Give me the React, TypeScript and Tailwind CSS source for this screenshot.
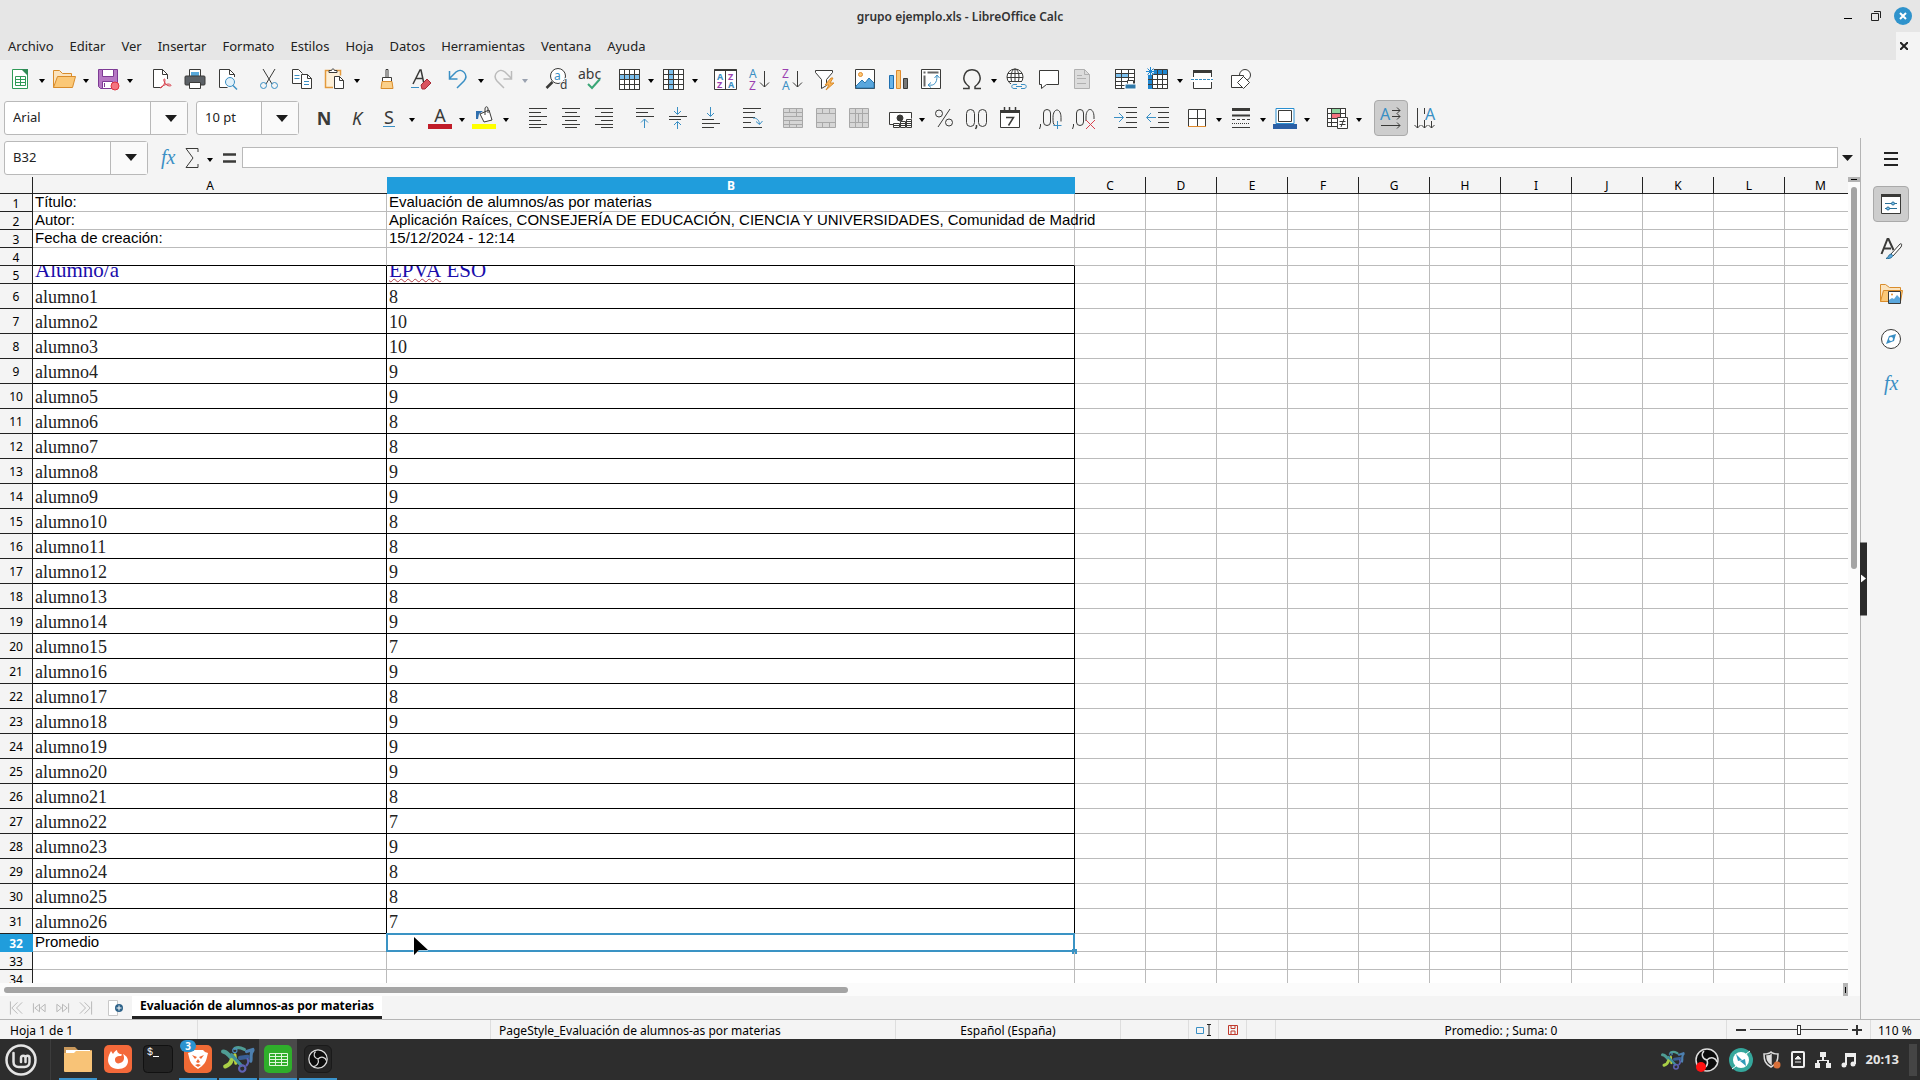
import type { ReactNode } from "react";

const INK = "#3a3a38";
const BLUE = "#3a8fc4";

// toolbar artwork, drawn on a 24px canvas
const icons: Record<string, ReactNode> = {
  newSheet: (
    <>
      <path d="M4.5 2.5h10l5 5v14h-15z" fill="#fff" stroke="#2f9a57" />
      <path d="M13 2h7v7z" fill="#2f8a55" stroke="none" />
      <path d="M7.5 9.5h10v9h-10zM7.5 12.5h10M7.5 15.5h10M12.5 9.5v9" stroke="#2f9a57" />
    </>
  ),
  open: (
    <>
      <path d="M1.5 20.5v-17h6l3 3h9v3" fill="#fbe3bd" stroke="#d98c2b" />
      <path d="M1.5 20.5l4-11h18l-3 11z" fill="#fbc877" stroke="#d98c2b" />
    </>
  ),
  save: (
    <>
      <path d="M2.5 2.5h19v19h-17l-2-2z" fill="#b678c4" stroke="#7d3a94" />
      <path d="M6.5 2.5h11v7h-11zM6.5 14.5h10v7h-10z" fill="#fff" stroke="#7d3a94" />
      <path d="M8.5 16v4" stroke="#7d3a94" />
      <circle cx="19" cy="19" r="4" fill="#f37480" stroke="#e0323f" />
    </>
  ),
  pdf: (
    <>
      <path d="M17.5 12v-4.500l-5-5h-9v18h8" fill="#fff" />
      <path d="M12.500 2.500v5h5" />
      <path d="M10 21c3-1 5-4 5-8 0-2-2-1-1 1 1 3 3 5 6 5 2 0 1-2-2-2-3 .5-6 2-8 4z" stroke="#d8414d" />
    </>
  ),
  print: (
    <>
      <path d="M6.500 9v-6.500h11v6.500" fill="#fff" />
      <path d="M8 5h8v4h-8z" fill="#58a9dc" stroke="none" />
      <rect x="2" y="9" width="20" height="9" rx="1" fill="#5c6166" stroke="#3a3a38" />
      <path d="M6.500 15.500h11v6h-11z" fill="#fff" />
    </>
  ),
  preview: (
    <>
      <path d="M18.500 10v-2.500l-5-5h-10v18h8" fill="#fff" />
      <path d="M13.500 2.500v5h5" />
      <circle cx="14" cy="15" r="4.500" fill="#e2f1fa" stroke={BLUE} />
      <path d="M17 18.500l4 4" stroke={BLUE} strokeWidth="1.500" />
    </>
  ),
  cut: (
    <>
      <path d="M6 2l9 15M18 2l-9 15" />
      <circle cx="6.500" cy="18.500" r="3" stroke={BLUE} />
      <circle cx="17.500" cy="18.500" r="3" stroke={BLUE} />
    </>
  ),
  copy: (
    <>
      <path d="M11.500 16.500h-9v-14h6l4 4" fill="#fff" />
      <path d="M11.500 7.500h6l4 4v10h-10z" fill="#fff" />
      <path d="M17.500 7.500v4h4" />
      <path d="M4.500 8.500h5M4.500 11.500h5M14 14.500h5M14 17.500h5" stroke={BLUE} />
    </>
  ),
  paste: (
    <>
      <path d="M10 20.500h-7.500v-17h15v5" fill="#fdf0d9" stroke="#e49a3c" strokeWidth="1.500" />
      <path d="M6 5.500v-2h2.500c0-2 3-2 3 0h2.500v2z" fill="#fff" />
      <path d="M11.500 9.500h5l4 4v8h-9z" fill="#fff" />
      <path d="M16.500 9.500v4h4" />
    </>
  ),
  brush: (
    <>
      <path d="M11 2.500h2v8h-2zM7.500 10.500h9v4h-9z" fill="#fff" />
      <path d="M7 14.500h10l1 7h-12z" fill="#fbd08a" stroke="#d98c2b" />
    </>
  ),
  clear: (
    <>
      <path d="M5 17l7-14h1l3 14M8 11.500h7" strokeWidth="1.500" />
      <path d="M3 20.500h8" stroke={BLUE} />
      <path d="M13 18l6-6 4 4-6 6h-3z" fill="#d9545f" stroke="#a82a35" />
    </>
  ),
  undo: <path d="M2.500 4v8h8M3 11l6-6c6-5 13 3 8 9l-7 7" stroke={BLUE} strokeWidth="1.500" />,
  redo: <path d="M20.500 4v8h-8M20 11l-6-6c-6-5-13 3-8 9l7 7" stroke="#bbb" strokeWidth="1.500" />,
  find: (
    <>
      <circle cx="13" cy="9" r="7.500" fill="#fff" />
      <path d="M7.500 15l-6 6" strokeWidth="2.500" />
      <text x="9" y="13" fontSize="12" fill={BLUE} stroke="none">a</text>
      <text x="15" y="22" fontSize="12" fill={INK} stroke="#f4f4f4" strokeWidth="2" paintOrder="stroke">d</text>
    </>
  ),
  spell: (
    <>
      <text x="0" y="12" fontSize="14" fill={INK} stroke="none">abc</text>
      <path d="M10 17l4 4 8-9" stroke="#3aa676" strokeWidth="2" />
    </>
  ),
  row: (
    <>
      <path d="M2.500 2.500h20v20h-20z" fill="#fff" />
      <path d="M2 7h21v6h-21z" fill="#7cc0ee" stroke="none" />
      <path d="M2.500 2.500h20v20h-20zM2.500 7.500h20M2.500 12.500h20M2.500 17.500h20M7.500 2.500v20M12.500 2.500v20M17.500 2.500v20" />
    </>
  ),
  column: (
    <>
      <path d="M2.500 2.500h20v20h-20z" fill="#fff" />
      <path d="M7 2h6v21h-6z" fill="#7cc0ee" stroke="none" />
      <path d="M2.500 2.500h20v20h-20zM2.500 7.500h20M2.500 12.500h20M2.500 17.500h20M7.500 2.500v20M12.500 2.500v20M17.500 2.500v20" />
    </>
  ),
  sort: (
    <>
      <path d="M1.500 2.500h22v20h-22zM12.500 2.500v20" fill="#fff" />
      <path d="M1.500 3h22" strokeWidth="2" />
      <g stroke="none" fontSize="9" fontWeight="bold">
        <text x="4" y="13" fill={BLUE}>A</text>
        <text x="4" y="21" fill="#9a3fb0">Z</text>
        <text x="15" y="13" fill="#9a3fb0">Z</text>
        <text x="15" y="21" fill={BLUE}>A</text>
      </g>
    </>
  ),
  sortAsc: (
    <>
      <text x="3" y="11" fontSize="12" fill={BLUE} stroke="none">A</text>
      <text x="3" y="23" fontSize="12" fill="#9a3fb0" stroke="none">Z</text>
      <path d="M18.500 4v16M14 15.500l4.500 4.500 4.500-4.500" />
    </>
  ),
  sortDesc: (
    <>
      <text x="3" y="11" fontSize="12" fill="#9a3fb0" stroke="none">Z</text>
      <text x="3" y="23" fontSize="12" fill={BLUE} stroke="none">A</text>
      <path d="M18.500 4v16M14 15.500l4.500 4.500 4.500-4.500" />
    </>
  ),
  filter: (
    <>
      <path d="M3.500 3.500h17v2l-6 7v6l-5 3v-9l-6-7z" fill="#fff" />
      <path d="M19 11l-6 7h4l-3 5 8-7h-4l3-5z" fill="#fbb457" stroke="#d98c2b" />
    </>
  ),
  image: (
    <>
      <path d="M2.500 2.500h19v19h-19z" fill="#fff" />
      <path d="M3 19l6-6 3 3 4-5 5 5v5h-18z" fill="#5aa7dd" stroke="#2a78b0" />
      <circle cx="7.500" cy="7.500" r="2" fill="#fbc877" stroke="#e08a2c" />
    </>
  ),
  chart: (
    <>
      <path d="M3.500 8.500h4v13h-4z" fill="#68b3e8" stroke="#1f6fb0" />
      <path d="M10.500 3.500h4v18h-4z" fill="#fbc877" stroke="#e08a2c" />
      <path d="M17.500 11.500h4v10h-4z" fill="#777" />
    </>
  ),
  pivot: (
    <>
      <path d="M2.500 2.500h19v19h-19z" fill="#fff" />
      <path d="M4.500 5.500h2M8.500 5.500h11M5.500 8.500v11" stroke="#666" strokeWidth="2" />
      <path d="M10 18c5 1 8-2 8-9M15.500 11l2.500-3 2.500 3M12 15.500l-3 2.500 3 2.500" stroke={BLUE} />
    </>
  ),
  omega: <path d="M3 21.500h6v-2c-4-3-6-6-5-10 2-9 14-9 16 0 1 4-1 7-5 10v2h6" strokeWidth="1.500" />,
  link: (
    <>
      <circle cx="11" cy="10" r="8" fill="#fff" />
      <ellipse cx="11" cy="10" rx="4" ry="8" />
      <path d="M3 10.500h16M4 6.500h14M4 14.500h14M11 2v16" />
      <rect x="7" y="15" width="16" height="8" fill="#f4f4f4" stroke="none" />
      <path d="M13 17.500h-3c-3 0-3 4 0 4h3M17 17.500h3c3 0 3 4 0 4h-3M12 19.500h6" stroke={BLUE} />
    </>
  ),
  comment: <path d="M2.500 3.500h19v14h-12l-5 4v-4h-2z" fill="#fff" />,
  headerFooter: (
    <>
      <path d="M4.500 2.500h10l5 5v14h-15z" fill="#dcdcdc" stroke="#b0b0b0" />
      <path d="M14.500 2.500v5h5M7 8.500h5M7 11.500h9M7 16.500h9" stroke="#b0b0b0" />
    </>
  ),
  printArea: (
    <>
      <path d="M2.500 2.500h19v19h-19z" fill="#fff" />
      <path d="M2 6h13v5h-13z" fill="#7cc0ee" stroke="none" />
      <path d="M2.500 2.500h19v19h-19zM2.500 6.500h19M2.500 10.500h19M2.500 14.500h19M2.500 18.500h19M8.500 2.500v19M15.500 2.500v19" />
      <path d="M14.500 18v-4.500h6v4.500" fill="#fff" />
      <path d="M12 17h11v5h-11z" fill="#2f78a8" stroke="#fff" />
    </>
  ),
  freeze: (
    <>
      <path d="M2.500 2.500h19v19h-19z" fill="#fff" />
      <path d="M2 3h19v4h-19zM2 3h5v19h-5z" fill="#1f86cf" stroke="none" />
      <path d="M6.500 7.500h15v14h-15zM6.500 12.500h15M6.500 17.500h15M11.500 7.500v14M16.500 7.500v14M11.500 3v4M16.500 3v4M2 12.500h4M2 17.500h4" />
      <circle cx="4" cy="4" r="4" fill="#f4f4f4" stroke="none" />
      <path d="M4.500 0v9M0 4.500h9M1.500 1.500l6 6M7.500 1.500l-6 6" stroke="#1f86cf" />
    </>
  ),
  split: (
    <>
      <path d="M3.500 3.500h18v18h-18z" fill="#fff" />
      <path d="M3 4.500h19" strokeWidth="3" />
      <path d="M1 12.500h22" stroke="#fff" strokeWidth="5" />
      <path d="M1 12.500h22" stroke={BLUE} strokeDasharray="3 1" />
    </>
  ),
  draw: (
    <>
      <circle cx="16" cy="8" r="5.500" fill="#fff" />
      <path d="M2.500 8.500h12v12h-12z" fill="#fff" />
      <path d="M14.500 9.500l6 6-6 6-6-6z" fill="#fff" />
    </>
  ),
  bold: <text x="12" y="19" fontSize="18" fontWeight="bold" textAnchor="middle" fill={INK} stroke="none">N</text>,
  italic: <text x="12" y="19" fontSize="18" fontStyle="italic" textAnchor="middle" fill={INK} stroke="none">K</text>,
  underline: (
    <>
      <text x="11" y="18" fontSize="18" textAnchor="middle" fill={INK} stroke="none">S</text>
      <path d="M5 20.500h12" stroke={BLUE} />
    </>
  ),
  fontColor: (
    <>
      <text x="12" y="16" fontSize="18" textAnchor="middle" fill={INK} stroke="none">A</text>
      <path d="M0 18h24v5h-24z" fill="#c01c28" stroke="none" />
    </>
  ),
  highlight: (
    <>
      <path d="M8 8l9-4 3 10-8 2z" fill="#fff" />
      <path d="M13 9v-6c0-3 3-3 3 0v4" />
      <path d="M4 13V5h7l-4 3-1 5z" fill="#2f6fae" stroke="none" />
      <path d="M0 18h24v5h-24z" fill="#ffff00" stroke="none" />
    </>
  ),
  alignLeft: <path d="M3 2.500h18M3 6.500h12M3 10.500h18M3 14.500h12M3 18.500h18M3 21.500h12" />,
  alignCenter: <path d="M3 2.500h18M6 6.500h12M3 10.500h18M6 14.500h12M3 18.500h18M6 21.500h12" />,
  alignRight: <path d="M3 2.500h18M9 6.500h12M3 10.500h18M9 14.500h12M3 18.500h18M9 21.500h12" />,
  top: (
    <>
      <path d="M3 2.500h18M3 6.500h12M3 10.500h18" />
      <path d="M11.500 22v-9M8 16.500l3.500-3.500 3.500 3.500" stroke={BLUE} />
    </>
  ),
  middle: (
    <>
      <path d="M3 10.500h18M3 13.500h12" />
      <path d="M11.500 1v7M8 5l3.500 3.500 3.500-3.500M11.500 23v-7M8 19l3.500-3.500 3.500 3.500" stroke={BLUE} />
    </>
  ),
  bottom: (
    <>
      <path d="M3 13.500h12M3 17.500h18M3 21.500h12" />
      <path d="M11.500 1v9M8 7l3.500 3.500 3.500-3.500" stroke={BLUE} />
    </>
  ),
  wrap: (
    <>
      <path d="M3 2.500h18M3 6.500h12M3 11.500h12M3 16.500h8M3 21.500h19" />
      <path d="M13 12c4 0 6 2 6.500 6M16 15.500l3.500 3 3-3.500" stroke={BLUE} />
    </>
  ),
  merge: (
    <>
      <path d="M2.500 2.500h19v19h-19z" fill="#d6d6d6" stroke="#a8a8a8" />
      <path d="M2.500 6.500h19M2.500 10.500h19M2.500 14.500h19M2.500 18.500h19M8.500 2.500v4M15.500 2.500v8M8.500 14.500v7M15.500 18.500v3" stroke="#a8a8a8" />
    </>
  ),
  mergeCenter: (
    <>
      <path d="M2.500 2.500h19v19h-19z" fill="#d6d6d6" stroke="#a8a8a8" />
      <path d="M2.500 7.500h19M2.500 16.500h19M8.500 2.500v5M15.500 2.500v5M8.500 16.500v5M15.500 16.500v5" stroke="#a8a8a8" />
    </>
  ),
  unmerge: (
    <>
      <path d="M2.500 2.500h19v19h-19z" fill="#d6d6d6" stroke="#a8a8a8" />
      <path d="M2.500 7.500h19M2.500 16.500h19M8.500 2.500v5M15.500 2.500v19M8.500 7.500v14M11.500 7.500v9" stroke="#a8a8a8" />
    </>
  ),
  currency: (
    <>
      <path d="M12 18.500h-10.500v-12h22v6" fill="#fff" />
      <circle cx="12" cy="12" r="3" fill={INK} />
      <path d="M5.500 17.500h6v4h-6zM5.500 19.500h6M12.500 15.500h5v6h-5zM12.500 17.500h5M12.500 19.500h5M18.500 13.500h5v8h-5zM18.500 15.500h5M18.500 17.500h5M18.500 19.500h5" fill="#fff" />
    </>
  ),
  percent: (
    <>
      <circle cx="7" cy="7.500" r="3.500" />
      <circle cx="17" cy="16.500" r="3.500" />
      <path d="M18 3l-12 18" />
    </>
  ),
  number: (
    <>
      <rect x="1.500" y="3.500" width="8" height="17" rx="4" />
      <rect x="13.500" y="3.500" width="8" height="17" rx="4" />
      <path d="M11.500 19v2l-1 2" strokeWidth="1.500" />
    </>
  ),
  date: (
    <>
      <path d="M2.500 4.500h19v17h-19z" fill="#fff" />
      <path d="M2 5.500h20" strokeWidth="3" />
      <path d="M6.500 1v4M11.500 1v4M17.500 1v4M8 11.500h7.500l-5 8" strokeWidth="1.500" />
    </>
  ),
  addDecimal: (
    <>
      <path d="M1.500 18v2l-1 3" />
      <rect x="4.500" y="3.500" width="7" height="16" rx="3.500" />
      <path d="M16 19.500c-2-1-2-4-2-8 0-10 8-10 8 0v4" />
      <path d="M18.500 15v8M14.500 19.500h8" stroke={BLUE} />
    </>
  ),
  deleteDecimal: (
    <>
      <path d="M1.500 18v2l-1 3" />
      <rect x="4.500" y="3.500" width="7" height="16" rx="3.500" />
      <path d="M14 15v-4c0-10 8-10 8 0v2" />
      <path d="M14 14l9 9M23 14l-9 9" stroke="#d8414d" />
    </>
  ),
  indent: (
    <>
      <path d="M5 1.500h19M13 6.500h11M13 11.500h11M13 16.500h11M5 21.500h19" />
      <path d="M1 11.500h9M6 7l4.500 4.500-4.500 4.500" stroke={BLUE} />
    </>
  ),
  outdent: (
    <>
      <path d="M4 1.500h19M12 6.500h11M12 11.500h11M12 16.500h11M4 21.500h19" />
      <path d="M1 11.500h9M5 7l-4.500 4.500 4.500 4.500" stroke={BLUE} />
    </>
  ),
  borders: (
    <>
      <path d="M3.500 3.500h17v17h-17z" fill="#fff" />
      <path d="M12.500 3v18M3 12.500h18" />
      <path d="M3 20.500h18" stroke="#e08a2c" />
    </>
  ),
  lineStyle: (
    <>
      <path d="M3 3.500h18" strokeWidth="3" />
      <path d="M3 9.500h18" strokeWidth="2" />
      <path d="M3 13.500h18" strokeDasharray="3 2" />
      <path d="M3 17.500h18" strokeDasharray="1 1" />
      <path d="M3 21.500h18" />
    </>
  ),
  borderColor: (
    <>
      <path d="M3 2.500h18v15h-18z" fill="#fff" stroke="#2a8fd0" />
      <path d="M5.500 4.500h13v11h-13z" fill="#fff" />
      <path d="M0 18h24v5h-24z" fill="#2a5fa5" stroke="none" />
    </>
  ),
  conditional: (
    <>
      <path d="M2.500 2.500h18v18h-18z" fill="#fff" />
      <path d="M7 2h9v5h-9z" fill="#8fd6a0" stroke="none" />
      <path d="M7 8h8v4h-8z" fill="#f37480" stroke="none" />
      <path d="M2.500 2.500h18v18h-18zM2.500 7.500h18M2.500 12.500h18M2.500 16.500h18M6.500 2.500v18M15.500 2.500v18" />
      <path d="M12.500 11.500h10v11h-10z" fill="#fff" />
      <path d="M14.500 15.500h6M14.500 18.500h6M19 13l-3 8" />
    </>
  ),
  ltr: (
    <>
      <text x="1" y="14" fontSize="16" fill={BLUE} stroke="none">A</text>
      <path d="M13 4.500h8M18 1.500l3 3-3 3M13 10.500h8M18 7.500l3 3-3 3M2 19.500h19M18 16.500l3 3-3 3" />
    </>
  ),
  ttb: (
    <>
      <text x="12" y="14" fontSize="16" fill={BLUE} stroke="none">A</text>
      <path d="M4.500 2v20M1.500 19l3 3 3-3M11.500 2v6M11.500 14v8M8.500 19l3 3 3-3M18.500 15v7M15.500 19l3 3 3-3" />
    </>
  ),
  fx: (
    <text x="5" y="18" fontSize="20" fontStyle="italic" fontFamily="Liberation Serif, serif" fill={BLUE} stroke="none">fx</text>
  ),
  sigma: <path d="M18 6v-3.500h-12l7 9.500-7 9.500h12v-3.500" />,
  equals: <path d="M6 8.500h13M6 15.500h13" strokeWidth="2.500" />,
  menu: <path d="M5 6h14M5 12h14M5 18h14" stroke="#222" strokeWidth="2" />,
  properties: (
    <>
      <path d="M2.500 2.500h19v19h-19z" fill="#fff" />
      <path d="M2 3.500h20" strokeWidth="3" />
      <path d="M6 11.500h12M6 16.500h12" stroke="#2a6f96" />
      <circle cx="14" cy="11.500" r="1.500" fill="#7cc0ee" stroke="#2a6f96" />
      <circle cx="9" cy="16.500" r="1.500" fill="#7cc0ee" stroke="#2a6f96" />
    </>
  ),
  styles: (
    <>
      <path d="M2.500 17l6-15h1l5 11M5 11.500h7" strokeWidth="2" />
      <path d="M12 17l9-10c2-1 2 1 1 3l-8 9" fill="#fff" />
      <path d="M7 21.500c3-1 2-4 5-4.500 3 1 2 5-5 4.500z" fill="#5aa7dd" stroke="#2a6f96" />
    </>
  ),
  gallery: (
    <>
      <path d="M1.500 19.500v-17h5l4 3h11v3" fill="#fbe3bd" stroke="#d98c2b" />
      <path d="M1.500 19.500l3-11h19l-2 11z" fill="#fbc877" stroke="#d98c2b" />
      <path d="M9.500 9.500h12v12h-12z" fill="#fff" />
      <path d="M10 21v-3l3-2 2 1 3-4 3 3v5z" fill="#5aa7dd" stroke="none" />
      <circle cx="13" cy="12.500" r="1" fill="#e08a2c" stroke="none" />
    </>
  ),
  compass: (
    <>
      <circle cx="12" cy="12" r="9.500" fill="#fff" />
      <path d="M17 7l-2 7-8 3 3-8z" fill={BLUE} stroke="none" />
      <circle cx="12" cy="12" r="2" fill="#fff" stroke="none" />
    </>
  ),
};

const Icon = ({ name }: { name: string }) => (
  <svg width="24" height="24" viewBox="0 0 24 24" fill="none" stroke={INK} fontFamily="Noto Sans, sans-serif" className="shrink-0 overflow-visible">
    {icons[name]}
  </svg>
);

const Caret = ({ muted }: { muted?: boolean }) => (
  <svg width="6" height="4" viewBox="0 0 6 4" className={muted ? "fill-gray-400" : "fill-black"}>
    <path d="M0 0h6l-3 4z" />
  </svg>
);

type Item = { icon: string; label: string; drop?: boolean; muted?: boolean; on?: boolean };

const Group = ({ items, className }: { items: Item[]; className?: string }) => (
  <div className={"flex items-center " + (className ?? "")}>
    {items.map((item) => (
      <div key={item.icon} className="flex items-center">
        <button
          aria-label={item.label}
          className={
            item.on
              ? "flex h-9 w-[34px] items-center justify-center rounded-sm border border-[#aaa] bg-[#cdcdcd]"
              : "flex h-9 w-[33px] items-center justify-center"
          }
        >
          <Icon name={item.icon} />
        </button>
        {item.drop && (
          <button aria-label={item.label + ": opciones"} className="flex h-9 w-[11px] items-center justify-center pt-1">
            <Caret muted={item.muted} />
          </button>
        )}
      </div>
    ))}
  </div>
);

const Combo = ({ label, value, width }: { label: string; value: string; width: string }) => (
  <div className={"flex h-[34px] shrink-0 rounded-[3px] border border-[#b9b9b9] bg-white " + width}>
    <input aria-label={label} defaultValue={value} className="min-w-0 flex-1 bg-transparent pl-2 text-[13px] outline-none" />
    <button aria-label={label + ": lista"} className="flex w-[37px] items-center justify-center border-l border-[#b9b9b9] bg-[#fafafa] pl-1">
      <svg width="12" height="7" viewBox="0 0 12 7" fill="#1c1c1c">
        <path d="M0 0h12l-6 7z" />
      </svg>
    </button>
  </div>
);

const menus = ["Archivo", "Editar", "Ver", "Insertar", "Formato", "Estilos", "Hoja", "Datos", "Herramientas", "Ventana", "Ayuda"];

const TitleBar = () => (
  <div className="grid h-8 grid-cols-[1fr_auto_1fr] items-center bg-[#e6e6e6]">
    <span />
    <h1 className="pt-0.5 text-[12px] font-semibold text-[#333]">grupo ejemplo.xls - LibreOffice Calc</h1>
    <div className="flex items-center justify-end pr-2">
      <button aria-label="Minimizar" className="flex w-7 justify-center pt-1">
        <span className="block h-px w-2 bg-black" />
      </button>
      <button aria-label="Restaurar" className="flex w-7 justify-center">
        <svg width="10" height="10" viewBox="0 0 10 10" fill="none" stroke="#222">
          <path d="M.5 2.500h7v7h-7zM3 .5h6.500v6.500" />
        </svg>
      </button>
      <button aria-label="Cerrar ventana" className="ml-1 flex h-[18px] w-[18px] items-center justify-center rounded-full bg-[#2f93cc]">
        <svg width="8" height="8" viewBox="0 0 8 8" stroke="#fff" strokeWidth="2">
          <path d="M1 1l6 6M7 1l-6 6" />
        </svg>
      </button>
    </div>
  </div>
);

const MenuBar = () => (
  <nav className="flex h-7 items-center justify-between bg-[#e6e6e6]">
    <div className="flex gap-4 pt-0.5 pl-2">
      {menus.map((m) => (
        <button key={m} className="text-[13px]">{m}</button>
      ))}
    </div>
    <button aria-label="Cerrar documento" className="flex h-7 w-6 items-center justify-center bg-[#f4f4f4] pr-2">
      <svg width="8" height="8" viewBox="0 0 8 8" stroke="#222" strokeWidth="2">
        <path d="M0 0l8 8M8 0l-8 8" />
      </svg>
    </button>
  </nav>
);

const StandardBar = () => (
  <div className="flex h-[38px] items-center pl-[3px]">
    <Group items={[
      { icon: "newSheet", label: "Nuevo", drop: true },
      { icon: "open", label: "Abrir", drop: true },
      { icon: "save", label: "Guardar", drop: true },
    ]} />
    <Group className="ml-[10px]" items={[
      { icon: "pdf", label: "Exportar a PDF" },
      { icon: "print", label: "Imprimir" },
      { icon: "preview", label: "Vista previa" },
    ]} />
    <Group className="ml-2" items={[
      { icon: "cut", label: "Cortar" },
      { icon: "copy", label: "Copiar" },
      { icon: "paste", label: "Pegar", drop: true },
    ]} />
    <Group className="ml-2" items={[
      { icon: "brush", label: "Clonar formato" },
      { icon: "clear", label: "Limpiar formato" },
    ]} />
    <Group className="ml-[6px]" items={[
      { icon: "undo", label: "Deshacer", drop: true },
      { icon: "redo", label: "Rehacer", drop: true, muted: true },
    ]} />
    <Group className="ml-[10px]" items={[
      { icon: "find", label: "Buscar y reemplazar" },
      { icon: "spell", label: "Ortografía" },
    ]} />
    <Group className="ml-[6px]" items={[
      { icon: "row", label: "Fila", drop: true },
      { icon: "column", label: "Columna", drop: true },
    ]} />
    <Group className="ml-2" items={[
      { icon: "sort", label: "Ordenar" },
      { icon: "sortAsc", label: "Orden ascendente" },
      { icon: "sortDesc", label: "Orden descendente" },
      { icon: "filter", label: "Filtro automático" },
    ]} />
    <Group className="ml-2" items={[
      { icon: "image", label: "Imagen" },
      { icon: "chart", label: "Gráfico" },
      { icon: "pivot", label: "Tabla dinámica" },
    ]} />
    <Group className="ml-2" items={[
      { icon: "omega", label: "Símbolo", drop: true },
      { icon: "link", label: "Hiperenlace" },
      { icon: "comment", label: "Comentario" },
      { icon: "headerFooter", label: "Cabeceras y pies" },
    ]} />
    <Group className="ml-[10px]" items={[
      { icon: "printArea", label: "Área de impresión" },
      { icon: "freeze", label: "Inmovilizar", drop: true },
    ]} />
    <Group items={[{ icon: "split", label: "Dividir" }]} />
    <Group className="ml-[6px]" items={[{ icon: "draw", label: "Dibujo" }]} />
  </div>
);

const FormatBar = () => (
  <div className="flex h-10 items-center pl-1">
    <Combo label="Tipo de letra" value="Arial" width="w-[184px]" />
    <div className="ml-2 flex">
      <Combo label="Tamaño" value="10 pt" width="w-[103px]" />
    </div>
    <Group className="ml-2" items={[
      { icon: "bold", label: "Negrita" },
      { icon: "italic", label: "Cursiva" },
      { icon: "underline", label: "Subrayado", drop: true },
    ]} />
    <Group className="ml-[6px]" items={[
      { icon: "fontColor", label: "Color de letra", drop: true },
      { icon: "highlight", label: "Color de fondo", drop: true },
    ]} />
    <Group className="ml-[10px]" items={[
      { icon: "alignLeft", label: "Izquierda" },
      { icon: "alignCenter", label: "Centrar" },
      { icon: "alignRight", label: "Derecha" },
    ]} />
    <Group className="ml-2" items={[
      { icon: "top", label: "Arriba" },
      { icon: "middle", label: "Centro" },
      { icon: "bottom", label: "Abajo" },
    ]} />
    <Group className="ml-2" items={[{ icon: "wrap", label: "Ajustar texto" }]} />
    <Group className="ml-2" items={[
      { icon: "merge", label: "Combinar celdas" },
      { icon: "mergeCenter", label: "Combinar y centrar" },
      { icon: "unmerge", label: "Dividir celdas" },
    ]} />
    <Group className="ml-2" items={[
      { icon: "currency", label: "Moneda", drop: true },
      { icon: "percent", label: "Porcentaje" },
      { icon: "number", label: "Número" },
      { icon: "date", label: "Fecha" },
    ]} />
    <Group className="ml-2" items={[
      { icon: "addDecimal", label: "Añadir decimal" },
      { icon: "deleteDecimal", label: "Quitar decimal" },
    ]} />
    <Group className="ml-2" items={[
      { icon: "indent", label: "Aumentar sangría" },
      { icon: "outdent", label: "Reducir sangría" },
    ]} />
    <Group className="ml-[6px]" items={[
      { icon: "borders", label: "Bordes", drop: true },
      { icon: "lineStyle", label: "Estilo de borde", drop: true },
      { icon: "borderColor", label: "Color de borde", drop: true },
    ]} />
    <Group className="ml-2" items={[{ icon: "conditional", label: "Formato condicional", drop: true }]} />
    <Group className="ml-[10px]" items={[
      { icon: "ltr", label: "Izquierda a derecha", on: true },
      { icon: "ttb", label: "Arriba a abajo" },
    ]} />
  </div>
);

const FormulaBar = () => (
  <div className="flex h-[39px] items-center pl-1">
    <Combo label="Cuadro de nombre" value="B32" width="w-36" />
    <button aria-label="Asistente de funciones" className="ml-2 flex w-6 justify-center"><Icon name="fx" /></button>
    <button aria-label="Seleccionar función" className="flex w-6 justify-center"><Icon name="sigma" /></button>
    <button aria-label="Más funciones" className="flex w-3 justify-center pt-1"><Caret /></button>
    <button aria-label="Fórmula" className="flex w-[26px] justify-center"><Icon name="equals" /></button>
    <input aria-label="Línea de entrada" className="h-[21px] min-w-0 flex-1 border border-[#b9b9b9] bg-white px-1 text-[13px] outline-none" />
    <button aria-label="Expandir barra de fórmulas" className="flex w-[22px] justify-center pr-1">
      <svg width="11" height="6" viewBox="0 0 11 6" fill="#1c1c1c"><path d="M0 0h11l-5.500 6z" /></svg>
    </button>
  </div>
);

const cols = ["A", "B", "C", "D", "E", "F", "G", "H", "I", "J", "K", "L", "M"];
const grades = [8, 10, 10, 9, 9, 8, 8, 9, 9, 8, 8, 9, 8, 9, 7, 9, 8, 9, 9, 9, 8, 7, 9, 8, 8, 7];

type Row = { n: number; a?: string; b?: string; kind: "plain" | "head" | "student" };
const rows: Row[] = [
  { n: 1, a: "Título:", b: "Evaluación de alumnos/as por materias", kind: "plain" },
  { n: 2, a: "Autor:", b: "Aplicación Raíces, CONSEJERÍA DE EDUCACIÓN, CIENCIA Y UNIVERSIDADES, Comunidad de Madrid", kind: "plain" },
  { n: 3, a: "Fecha de creación:", b: "15/12/2024 - 12:14", kind: "plain" },
  { n: 4, kind: "plain" },
  { n: 5, a: "Alumno/a", b: "EPVA ESO", kind: "head" },
  ...grades.map((g, i): Row => ({ n: i + 6, a: "alumno" + (i + 1), b: String(g), kind: "student" })),
  { n: 32, a: "Promedio", kind: "plain" },
  { n: 33, kind: "plain" },
  { n: 34, kind: "plain" },
];

const CellText = ({ kind, text }: { kind: Row["kind"]; text?: string }) => {
  if (!text) return null;
  if (kind === "head") {
    const [first, ...rest] = text.split(" ");
    return (
      <div className="flex h-[17px] items-end overflow-hidden pl-[2px] font-['Liberation_Serif',serif] text-[21px] leading-[26px] text-[#1a0dab]">
        <span className={rest.length ? "underline decoration-[#b0404a] decoration-wavy decoration-1 underline-offset-1" : ""}>{first}</span>
        {rest.length > 0 && <span className="whitespace-pre">{" " + rest.join(" ")}</span>}
      </div>
    );
  }
  if (kind === "student") {
    return <div className="h-6 pl-[2px] font-['Liberation_Serif',serif] text-[18px] leading-[26px] text-[#222]">{text}</div>;
  }
  return <div className="h-[17px] w-0 pl-[2px] font-['Liberation_Sans',sans-serif] text-[15px] leading-[15px] text-black">{text}</div>;
};

const Pointer = () => (
  <svg width="16" height="20" viewBox="0 0 16 20" className="absolute top-0.5 left-[26px] z-10">
    <path d="M1 1v18l5-5h9z" fill="#000" stroke="#fff" strokeWidth="1" paintOrder="stroke" />
  </svg>
);

const Sheet = () => (
  <table className="w-full table-fixed border-separate border-spacing-0 bg-white">
    <colgroup>
      <col className="w-[33px]" />
      <col className="w-[354px]" />
      <col className="w-[688px]" />
      {cols.slice(2, -1).map((c) => <col key={c} className="w-[71px]" />)}
      <col />
    </colgroup>
    <thead>
      <tr className="h-[17px] bg-[#f4f4f4] text-[12px] leading-[14px] text-black">
        <th className="border-r border-b border-[#222] p-0" />
        {cols.map((c) => (
          <th
            key={c}
            scope="col"
            className={
              c === "B"
                ? "border-b border-[#209ddc] bg-[#209ddc] p-0 pt-0.5 font-bold text-white"
                : c === "A"
                  ? "border-b border-[#222] p-0 pt-0.5 font-normal"
                  : c === "M"
                    ? "border-b border-[#222] p-0 pt-0.5 pl-2 font-normal"
                    : "border-r border-b border-[#222] p-0 pt-0.5 font-normal"
            }
          >
            {c}
          </th>
        ))}
      </tr>
    </thead>
    <tbody>
      {rows.map(({ n, a, b, kind }) => {
        const boxed = n >= 5 && n <= 31;
        const bottom = n >= 4 && n <= 31 ? "border-b-black" : "border-b-[#bbb]";
        const right = boxed ? "border-r-black" : "border-r-[#bbb]";
        return (
          <tr key={n} className={kind === "student" ? "h-[25px]" : "h-[18px]"}>
            <th
              scope="row"
              className={
                n === 32
                  ? "border-r border-b border-[#209ddc] bg-[#209ddc] p-0 pt-0.5 text-[12px] leading-[14px] font-bold text-white"
                  : "border-r border-b border-[#222] bg-[#f4f4f4] p-0 pt-0.5 text-[12px] leading-[14px] font-normal text-black"
              }
            >
              {n}
            </th>
            <td className={"border-r border-b p-0 align-bottom whitespace-nowrap " + bottom + " " + right}>
              <CellText kind={kind} text={a} />
            </td>
            <td className={"relative border-r border-b p-0 align-bottom whitespace-nowrap " + bottom + " " + right}>
              <CellText kind={kind} text={b} />
              {n === 32 && (
                <>
                  <span className="absolute -top-px -right-px -bottom-px -left-px border-2 border-[#3a93c4]" />
                  <span className="absolute -right-[3px] -bottom-[3px] h-[5px] w-[5px] bg-[#3a93c4]" />
                  <Pointer />
                </>
              )}
            </td>
            {cols.slice(2).map((c) => (
              <td key={c} className={c === "M" ? "border-b border-[#bbb] p-0" : "border-r border-b border-[#bbb] p-0"} />
            ))}
          </tr>
        );
      })}
    </tbody>
  </table>
);

const SheetTabs = () => (
  <div className="flex h-[23px] shrink-0 items-center">
    <div className="flex items-center gap-2 pl-[9px]">
      {[
        ["Primera hoja", "M1.500 0v14M14 1l-6 6 6 6M9 1l-6 6 6 6"],
        ["Hoja anterior", "M1.500 2v10M8 3v8l-5-4zM14 3v8l-5-4z"],
        ["Hoja siguiente", "M14.500 2v10M2 3v8l5-4zM8 3v8l5-4z"],
        ["Última hoja", "M14.500 0v14M2 1l6 6-6 6M7 1l6 6-6 6"],
      ].map(([label, d]) => (
        <button key={label} aria-label={label}>
          <svg width="15" height="14" viewBox="0 0 16 14" fill="none" stroke="#b4b4b4"><path d={d} /></svg>
        </button>
      ))}
    </div>
    <button aria-label="Añadir hoja" className="ml-[14px]">
      <svg width="17" height="16" viewBox="0 0 17 16" fill="none">
        <path d="M1.500.5h9v15h-9z" fill="#fff" stroke="#c8c8c8" />
        <circle cx="12" cy="8" r="4" fill="#2d6289" />
        <path d="M9.500 8h5M12 5.500v5" stroke="#fff" />
      </svg>
    </button>
    <button className="ml-2 h-[23px] border-b-[3px] border-[#222] bg-white px-2 text-[12px] font-bold text-black">
      Evaluación de alumnos-as por materias
    </button>
  </div>
);

const SideBar = () => (
  <aside className="relative flex w-[60px] shrink-0 flex-col items-center gap-[9px] border-l border-[#b4b4b4] pt-[3px]">
    {[
      ["menu", "Configuración de la barra lateral"],
      ["properties", "Propiedades"],
      ["styles", "Estilos"],
      ["gallery", "Galería"],
      ["compass", "Navegador"],
      ["fx", "Funciones"],
    ].map(([icon, label]) => (
      <button
        key={icon}
        aria-label={label}
        className={
          icon === "properties"
            ? "flex h-9 w-9 items-center justify-center rounded-sm border border-[#aaa] bg-[#cdcdcd]"
            : "flex h-9 w-9 items-center justify-center"
        }
      >
        <Icon name={icon} />
      </button>
    ))}
    <button aria-label="Ocultar barra lateral" className="absolute top-1/2 -left-px flex h-[73px] w-[7px] -translate-y-1/2 items-center bg-[#2b2b2b]">
      <svg width="6" height="8" viewBox="0 0 6 8" fill="#fff"><path d="M1 0l5 4-5 4z" /></svg>
    </button>
  </aside>
);

const StatusBar = () => (
  <footer className="flex h-5 shrink-0 items-stretch divide-x divide-[#dedede] border-t border-[#b4b4b4] text-[12px] leading-[21px] whitespace-nowrap text-black">
    <span className="w-[198px] pl-[10px]">Hoja 1 de 1</span>
    <span className="w-[293px]" />
    <span className="w-[405px] pl-2">PageStyle_Evaluación de alumnos-as por materias</span>
    <span className="w-[225px] text-center">Español (España)</span>
    <span className="w-[68px]" />
    <span className="flex w-[30px] items-center justify-center">
      <svg width="18" height="12" viewBox="0 0 18 12" fill="none">
        <path d="M1.500 3.500h7v6h-7z" stroke="#3a8fc4" />
        <path d="M12 .5h4M12 11.500h4M14 .5v11" stroke="#222" />
      </svg>
    </span>
    <span className="flex w-[28px] items-center justify-center">
      <svg width="10" height="10" viewBox="0 0 10 10" fill="none" stroke="#c0392b">
        <path d="M.5.5h9v9h-9zM3 .5v3h4v-3M3 9v-3h4v3" />
      </svg>
    </span>
    <span className="w-[29px]" />
    <span className="flex-1 text-center">Promedio: ; Suma: 0</span>
    <span className="flex w-[144px] items-center justify-center gap-1">
      <button aria-label="Alejar"><span className="block h-[2px] w-[10px] bg-[#333]" /></button>
      <input
        type="range"
        aria-label="Escala"
        min={0}
        max={100}
        defaultValue={50}
        className="h-3 w-[98px] appearance-none bg-[linear-gradient(#444,#444)] bg-[length:100%_1px] bg-center bg-no-repeat [&::-webkit-slider-thumb]:h-[10px] [&::-webkit-slider-thumb]:w-1 [&::-webkit-slider-thumb]:appearance-none [&::-webkit-slider-thumb]:border [&::-webkit-slider-thumb]:border-[#333] [&::-webkit-slider-thumb]:bg-white"
      />
      <button aria-label="Acercar">
        <svg width="10" height="10" viewBox="0 0 10 10" stroke="#333" strokeWidth="2"><path d="M0 5h10M5 0v10" /></svg>
      </button>
    </span>
    <span className="w-[49px] pl-[7px]">110 %</span>
  </footer>
);

const Bird = ({ size }: { size: number }) => (
  <svg width={size} height={size} viewBox="0 0 32 32" fill="none" strokeLinecap="round">
    <path d="M2 9c4 0 5 4 9 7" stroke="#4f9d94" strokeWidth="4" />
    <path d="M4 23c3-1 5-2 6-6" stroke="#a9cf46" strokeWidth="4" />
    <path d="M13 12l1 8" stroke="#b9d23c" strokeWidth="3" />
    <path d="M10 12l9 10" stroke="#3f8f9a" strokeWidth="3" />
    <path d="M13 6c4-2 7 0 9 1" stroke="#4f9d94" strokeWidth="3" />
    <circle cx="13" cy="8" r="2" stroke="#4c8fbf" />
    <path d="M24 9l6-2M30 8c-3 3-1 6-2 10" stroke="#4c7faf" strokeWidth="3" />
    <path d="M18 15l7-1" stroke="#3a5f96" strokeWidth="4" />
    <circle cx="20" cy="25" r="3" stroke="#5f62b5" strokeWidth="2" />
    <path d="M24 22c2-2 2-4 1-6" stroke="#5f62b5" strokeWidth="2" />
  </svg>
);

const Obs = ({ size, rec }: { size: number; rec?: boolean }) => (
  <svg width={size} height={size} viewBox="0 0 24 24" fill="none" stroke="#ddd" strokeWidth="1.500">
    <circle cx="12" cy="12" r="11" fill="#0c0c0c" />
    <path d="M12 12c-5-1-6-6-3-9M12 12c4-4 9-2 10 2M12 12c2 5-2 9-6 9" />
    {rec && <circle cx="6" cy="19" r="5" fill="#f11" stroke="none" />}
  </svg>
);

const apps: { name: string; open?: boolean; active?: boolean; badge?: string; art: ReactNode }[] = [
  {
    name: "Archivos",
    open: true,
    art: (
      <svg width="28" height="28" viewBox="0 0 28 28">
        <path d="M0 2h11l3 3h14v6H0z" fill="#c9985b" />
        <path d="M2 5h24v3H2z" fill="#fff" />
        <path d="M0 8h10l2-2h16v20c0 1-1 1-1 1H1c-1 0-1-1-1-1z" fill="#f8c377" />
      </svg>
    ),
  },
  {
    name: "Firefox",
    art: (
      <svg width="28" height="28" viewBox="0 0 28 28">
        <rect width="28" height="28" rx="5" fill="#f4693a" />
        <path d="M14 24C8 24 4 20 4 15c0-4 2-7 3-9l2 3c1-2 2-3 4-4 0 2 1 3 3 4 3 0 2 2 0 2-3 0-5 1-5 4s3 4 5 3c4-1 5-5 3-9 4 2 5 5 5 7 0 5-4 8-10 8z" fill="#fff" />
      </svg>
    ),
  },
  {
    name: "Terminal",
    art: (
      <svg width="30" height="28" viewBox="0 0 30 28" fontFamily="Liberation Mono, monospace">
        <rect x=".5" y=".5" width="29" height="27" rx="4" fill="#232323" stroke="#111" />
        <text x="4" y="10" fontSize="10" fill="#fff">$</text>
        <path d="M10 11.500h6" stroke="#fff" />
      </svg>
    ),
  },
  {
    name: "Brave",
    open: true,
    badge: "3",
    art: (
      <svg width="28" height="28" viewBox="0 0 28 28">
        <rect width="28" height="28" rx="5" fill="#f06a35" />
        <path d="M9 5h10l2 2 3 1-1 4c-1 5-3 8-9 12-6-4-8-7-9-12L4 8l3-1z" fill="#fff" />
        <path d="M8 10l5 2-2 2zM20 10l-5 2 2 2zM14 14l2 3-2 1-2-1zM11 20l3-1 3 1-3 2z" fill="#f06a35" />
      </svg>
    ),
  },
  { name: "Editor", open: true, art: <Bird size={34} /> },
  {
    name: "LibreOffice Calc",
    open: true,
    active: true,
    art: (
      <svg width="28" height="28" viewBox="0 0 28 28">
        <rect width="28" height="28" rx="5" fill="#2fae2b" />
        <path d="M5.500 8.500h18v12h-18zM5.500 11.500h18M5.500 14.500h18M5.500 17.500h18M11.500 8.500v12M17.500 8.500v12" fill="none" stroke="#dff5dc" />
      </svg>
    ),
  },
  {
    name: "OBS Studio",
    open: true,
    art: (
      <span className="flex h-7 w-7 items-center justify-center rounded-md border border-[#1a1a1a] bg-[#252525]">
        <Obs size={20} />
      </span>
    ),
  },
];

const TaskBar = () => (
  <div className="flex h-[41px] shrink-0 items-stretch justify-between bg-[#2d2d2d] text-[#e4e4e4]">
    <div className="flex items-stretch">
      <button aria-label="Menú" className="flex w-[51px] items-center border-r border-[#3c3c3c] pl-[5px]">
        <svg width="32" height="32" viewBox="0 0 32 32" fill="none" stroke="#e4e4e4" strokeLinecap="round">
          <circle cx="16" cy="16" r="14.500" strokeWidth="2.500" />
          <path d="M8.500 9v9c0 3 2 5 5 5h6c3 0 5-2 5-5v-4c0-3-4-3-4 0v4M20.500 14c0-3-4.500-3-4.500 0v4" strokeWidth="2.500" />
        </svg>
      </button>
      <div className="ml-2 flex items-stretch gap-[2px]">
        {apps.map((app) => (
          <button
            key={app.name}
            aria-label={app.name}
            className={
              "relative flex w-[38px] items-center justify-center border-b-2 " +
              (app.open ? "border-[#3a93cc] " : "border-transparent ") +
              (app.active ? "bg-[#4a4a4a]" : "")
            }
          >
            {app.art}
            {app.badge && (
              <span className="absolute top-px left-px flex h-3 w-4 items-center justify-center rounded-full bg-[#2a93d0] text-[10px] leading-none font-bold text-white">
                {app.badge}
              </span>
            )}
          </button>
        ))}
      </div>
    </div>
    <div className="flex items-center">
      <div className="flex items-center gap-[10px] pr-[10px]">
        <Bird size={24} />
        <Obs size={24} rec />
        <svg width="24" height="24" viewBox="0 0 24 24">
          <circle cx="12" cy="12" r="12" fill="#35a79c" />
          <circle cx="12" cy="12" r="8" fill="#fff" />
          <path d="M7 6l6 6-4 1zM17 18l-6-5 5-2z" fill="#2f9bb8" />
          <path d="M3 21l4-3M17 6l4-3" stroke="#fff" />
        </svg>
        <svg width="18" height="18" viewBox="0 0 18 18" fill="none" stroke="#ddd" strokeWidth="1.500">
          <path d="M8 1c2 2 5 2 7 2 0 6-1 10-7 13C2 13 1 9 1 3c2 0 5 0 7-2z" />
          <path d="M8 4v9c-3-2-4-4-4-8 2 0 3 0 4-1z" fill="#ddd" />
          <circle cx="14" cy="14" r="3.500" fill="#d9703a" stroke="none" />
        </svg>
        <svg width="14" height="17" viewBox="0 0 14 17" fill="none" stroke="#eee" strokeWidth="2">
          <rect x="1" y="1" width="12" height="15" rx="1" />
          <path d="M4 8l3-3 3 3zM4 11h6" fill="#eee" strokeWidth="1" />
        </svg>
        <svg width="16" height="16" viewBox="0 0 16 16" fill="#eee">
          <path d="M5 0h6v5H5zM0 11h5v5H0zM11 11h5v5h-5zM7 5h2v3h5v3h-2V9H4v2H2V8h5z" />
        </svg>
        <svg width="15" height="16" viewBox="0 0 15 16" fill="#eee">
          <path d="M4 1h11v11h-2V5H6v8H4z" />
          <circle cx="3" cy="13" r="2.500" />
          <circle cx="12" cy="12" r="2.500" />
        </svg>
        <span className="text-[13px] font-bold">20:13</span>
      </div>
      <button aria-label="Mostrar escritorio" className="mr-[3px] h-8 w-2 bg-[#454545]" />
    </div>
  </div>
);

export default function App() {
  return (
    <div className="flex h-screen flex-col overflow-hidden bg-[#f4f4f4] font-['Noto_Sans',sans-serif] text-[#222]">
      <TitleBar />
      <MenuBar />
      <StandardBar />
      <FormatBar />
      <div className="flex min-h-0 flex-1">
        <main className="flex min-w-0 flex-1 flex-col">
          <FormulaBar />
          <div className="flex min-h-0 flex-1">
            <div className="flex min-w-0 flex-1 flex-col">
              <div className="min-h-0 flex-1 overflow-hidden">
                <Sheet />
              </div>
              <div className="flex h-[13px] shrink-0 items-center bg-[#fbfbfb] pl-1">
                <div className="h-[6px] w-[844px] rounded-full bg-[#a4a4a4]" />
                <div className="ml-auto flex h-[13px] w-[5px] items-center justify-center bg-[#b4b4b4]">
                  <span className="h-[6px] w-px bg-black" />
                </div>
              </div>
            </div>
            <div className="flex w-3 shrink-0 flex-col items-center bg-[#fbfbfb]">
              <div className="flex h-[5px] w-full items-center justify-center bg-[#b4b4b4]">
                <span className="h-px w-[6px] bg-black" />
              </div>
              <div className="mt-[5px] h-[382px] w-[6px] rounded-full bg-[#a4a4a4]" />
            </div>
          </div>
          <SheetTabs />
        </main>
        <SideBar />
      </div>
      <StatusBar />
      <TaskBar />
    </div>
  );
}
